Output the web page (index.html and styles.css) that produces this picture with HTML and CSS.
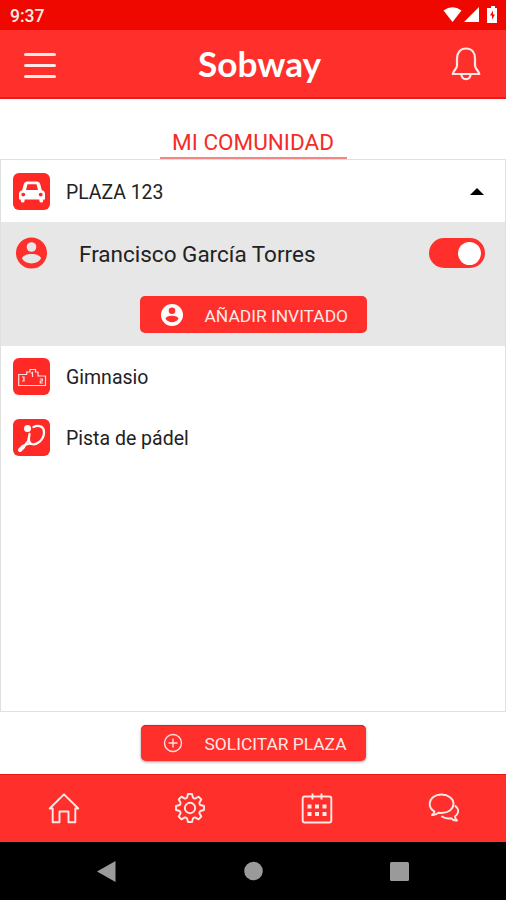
FILE: index.html
```html
<!DOCTYPE html>
<html lang="es">
<head>
<meta charset="utf-8">
<title>Sobway</title>
<link rel="stylesheet" href="styles.css">
</head>
<body>
<div class="status">
  <span>9:37</span>
  <svg width="56" height="18" viewBox="0 0 56 18" fill="#fff">
    <path d="M0.500 4.500Q9.500-2 18.500 4.500L9.500 16Z"/>
    <path d="M36 1v15H21Z"/>
    <path d="M46 2h2V0h4v2h2v15h-10V2Z"/>
    <path d="M50 4.500l-3 5h2v4l3-5h-2Z" fill="#ef0800"/>
  </svg>
</div>
<header class="header">
  <div class="menu"><i></i><i></i><i></i></div>
  <h1>Sobway</h1>
  <svg class="bell" width="30" height="34" viewBox="0 0 30 34" fill="none" stroke="#ffe9e7" stroke-width="2.200" stroke-linejoin="round">
    <path d="M6 18.500V11.500C6 5.500 9.500 1.500 15 1.500S24 5.500 24 11.500V18.500C24 22 27.500 23 28.300 27H1.700C2.500 23 6 22 6 18.500Z"/>
    <path d="M10.500 28C11 33.500 19 33.500 19.500 28"/>
  </svg>
</header>
<div class="tabs"><div class="tab"><span>MI COMUNIDAD</span></div></div>
<main class="list">
  <div class="row">
    <span class="tile">
      <svg width="38" height="38" viewBox="0 0 38 38">
        <path fill="#fff" fill-rule="evenodd" d="M14 8.500H24Q26.500 8.500 27.200 11L28.700 17Q32 18 32 21V26.500H30.200V28Q30 29.500 28.300 29.500T26.400 28V26.500H11.600V28Q11.400 29.500 9.700 29.500T7.800 28V26.500H6V21Q6 18 9.300 17L10.800 11Q11.500 8.500 14 8.500ZM14.500 11.300 13 17H25L23.500 11.300Z"/>
        <circle cx="10.300" cy="21.600" r="1.900" fill="#ff2a26"/><circle cx="27.700" cy="21.600" r="1.900" fill="#ff2a26"/>
      </svg>
    </span>
    <span class="label plaza">PLAZA 123</span>
    <svg class="caret" width="14" height="7" viewBox="0 0 14 7"><path d="M0 7 7 0l7 7Z"/></svg>
  </div>
  <section class="guests">
    <div class="person">
      <svg width="32" height="32" viewBox="0 0 32 32">
        <circle cx="16.500" cy="16" r="15.500" fill="#ff2f2b"/>
        <circle cx="16.500" cy="10" r="4.800" fill="#e7e7e7"/>
        <path d="M7 21.500C8 15.500 25 15.500 26 21.500C22 28 11 28 7 21.500Z" fill="#e7e7e7"/>
      </svg>
      <span class="name">Francisco García Torres</span>
      <span class="switch"><i></i></span>
    </div>
    <button class="button invite">
      <svg width="22" height="22" viewBox="0 0 32 32">
        <circle cx="16" cy="16" r="16" fill="#fff"/>
        <circle cx="16" cy="9.800" r="4.800" fill="#ff2f2b"/>
        <path d="M6.500 21.500C7.500 15.500 24.500 15.500 25.500 21.500C21.500 28 10.500 28 6.500 21.500Z" fill="#ff2f2b"/>
      </svg>
      <span>AÑADIR INVITADO</span>
    </button>
  </section>
  <div class="row facility">
    <span class="tile">
      <svg width="38" height="38" viewBox="0 0 38 38" fill="none" stroke="#fff" stroke-opacity=".85" stroke-width="1.200">
        <path d="M5.700 27.500V16.500H13.700V14H17V11.500H22.500V14H25V18H32.500V27.500Z"/>
        <path d="M18.300 15.500l1.200-1V19M9 19h2v4H9M10 21h1M26.800 21h2.500v2h-2v2h2.500"/>
      </svg>
    </span>
    <span class="label gym">Gimnasio</span>
  </div>
  <div class="row facility">
    <span class="tile">
      <svg width="38" height="38" viewBox="0 0 38 38" fill="none" stroke="#fff" stroke-linecap="round">
        <circle cx="14.500" cy="9.500" r="3.500" fill="#fff" stroke="none"/>
        <path stroke-width="2.300" d="M20.500 8C26 5.500 31.500 7.500 31 14C30.500 21 24 26.500 18.500 25C15 24 15.500 20 16.500 15"/>
        <path stroke-width="1.800" d="M16 19C15.500 22 14 24 11.500 26.500M18.500 25C16 24.500 14 25 11.500 26.500"/>
        <path stroke-width="4" d="M10.500 27.500 7 31"/>
      </svg>
    </span>
    <span class="label padel">Pista de pádel</span>
  </div>
</main>
<div class="action">
  <button class="button request">
    <svg width="20" height="20" viewBox="0 0 20 20" fill="none" stroke="#fff" stroke-opacity=".85" stroke-width="1.400"><circle cx="10" cy="10" r="8.500"/><path d="M10 5.500v9M5.500 10h9"/></svg>
    <span>SOLICITAR PLAZA</span>
  </button>
</div>
<nav class="nav">
  <svg viewBox="-16 -16 32 32"><path d="M-14.300 0.500 0-13.700 14.300 0.500H11.300V14.200H4.500V3.500H-4.500V14.200H-11.300V0.500Z"/></svg>
  <svg viewBox="-16 -16 32 32"><circle r="5.200"/><path d="M-3-10.300-2-14H2L3-10.300Q4-9.300 5.160-9.400L8.500-11.300 11.300-8.500 9.400-5.160Q9.300-4 10.300-3L14-2V2L10.300 3Q9.300 4 9.400 5.160L11.300 8.500 8.500 11.300 5.160 9.400Q4 9.300 3 10.300L2 14H-2L-3 10.300Q-4 9.300-5.160 9.400L-8.500 11.300-11.300 8.500-9.400 5.160Q-9.300 4-10.300 3L-14 2V-2L-10.300-3Q-9.300-4-9.400-5.160L-11.300-8.500-8.500-11.300-5.160-9.400Q-4-9.300-3-10.300Z"/></svg>
  <svg viewBox="-16 -16 32 32"><rect x="-14.300" y="-11.500" width="28.600" height="26" rx="2"/><path d="M-4.500-14.500v6M4.500-14.500v6"/><path stroke-width="4" stroke-dasharray="4 3.500" d="M-9.500-1.500h19M-9.500 6h19"/></svg>
  <svg viewBox="-17 -16 32 32"><path d="M-9.500 3.500C-13 1.500-14.500-1-14.300-4.500C-14-10-9-13.500-2.500-13.500S9.500-9.500 9.500-4.200S4 5-2.500 5L-5.500 4.800C-7.500 6.500-9.500 7.200-12 7C-10.500 6-9.700 5-9.500 3.500Z"/><path d="M10.800-2.500C15.500 1 15 5.500 11 8.300C11 10.500 11.500 11.500 13 12.500C10.500 12.800 8.500 12 7 10.200C3 11 0 10-2.500 8.200"/></svg>
</nav>
<div class="system">
  <svg width="19" height="21" viewBox="0 0 19 21"><path d="M0 10.500 18.500 0v21Z"/></svg>
  <svg width="20" height="20" viewBox="0 0 20 20"><circle cx="10.500" cy="10" r="9.300"/></svg>
  <svg width="19" height="19" viewBox="0 0 19 19"><rect width="19" height="19" rx="1.500"/></svg>
</div>
</body>
</html>
```

FILE: styles.css
```css
* { box-sizing: border-box; }
body {
  margin: 0;
  width: 506px;
  height: 900px;
  display: flex;
  flex-direction: column;
  overflow: hidden;
  background: #fff;
  color: #222;
  font-family: Roboto, "Liberation Sans", sans-serif;
}
svg { display: block; flex: none; }
.status {
  height: 30px;
  flex: none;
  display: flex;
  justify-content: space-between;
  align-items: center;
  padding: 0 7px 0 10px;
  background: #ef0800;
  color: #ffe9e7;
  font-size: 17.5px;
  font-weight: 500;
}
.status span { padding-top: 2px; }
.header {
  height: 69px;
  flex: none;
  display: grid;
  grid-template-columns: 64px 1fr 64px;
  align-items: center;
  padding: 0 8px;
  background: #ff2f2c;
  border-bottom: 2px solid #e91b18;
  color: #fff;
}
.menu { display: grid; gap: 8px; padding: 3px 0 0 16px; width: 48px; }
.menu i { height: 3px; border-radius: 2px; background: #ffe9e7; }
.header h1 {
  margin: 0;
  padding: 0 0 2px 13px;
  text-align: center;
  font: 700 35.2px/44px Lato, sans-serif;
}
.bell { justify-self: center; }
.tabs { height: 60px; flex: none; display: flex; justify-content: center; align-items: flex-end; }
.tab {
  width: 187px;
  height: 34px;
  padding-top: 4px;
  border-bottom: 2px solid #f58582;
  color: #f52b28;
  text-align: center;
  font-size: 22.5px;
  line-height: 26px;
  white-space: nowrap;
}
.list { flex: 1; border: 1px solid #e0e0e0; }
.row { height: 62px; display: flex; align-items: center; padding: 0 21px 0 12px; }
.facility { height: 61px; }
.tile {
  width: 37px;
  height: 37px;
  border-radius: 6px;
  background: #ff2a26;
  margin-right: 16px;
  overflow: hidden;
}
.label { font-size: 19.5px; line-height: 24px; padding-top: 3px; }
.plaza { font-size: 19.4px; }
.caret { margin-left: auto; }
.guests { height: 124px; background: #e7e7e7; display: flex; flex-direction: column; align-items: center; }
.person { width: 100%; height: 62px; display: flex; align-items: center; padding: 0 20px 0 14px; }
.name { margin-left: 32px; padding-top: 2px; font-size: 22.5px; }
.switch {
  width: 56px;
  height: 30px;
  margin-left: auto;
  padding: 4px;
  border-radius: 15px;
  background: #ff2f2b;
  display: flex;
  justify-content: flex-end;
}
.switch i { width: 23px; height: 23px; border-radius: 50%; background: #fff; }
.button {
  height: 37px;
  border: 0;
  border-radius: 5px;
  background: #ff2f2c;
  color: #ffe9e7;
  display: flex;
  align-items: center;
  font: 400 17.4px/22px Roboto, sans-serif;
  white-space: nowrap;
}
.button span { padding-top: 2px; }
.invite { width: 227px; margin-top: 12px; padding: 0 0 0 21px; gap: 22px; }
.action { height: 62px; flex: none; display: flex; justify-content: center; padding-top: 13px; }
.request { width: 225px; height: 36px; padding: 0 0 0 22px; gap: 22px; box-shadow: 0 1px 3px #0006, inset 0 1px #e51c19; }
.nav {
  height: 68px;
  flex: none;
  display: grid;
  grid-template-columns: repeat(4, 1fr);
  align-items: center;
  justify-items: center;
  padding-left: 1px;
  background: #ff2f2c;
  border-top: 1px solid #e51512;
}
.nav svg { width: 32px; height: 32px; margin-top: -1px; fill: none; stroke: #ffe9e7; stroke-width: 1.9; stroke-linejoin: round; }
.system {
  height: 58px;
  flex: none;
  display: flex;
  justify-content: space-between;
  align-items: center;
  padding: 0 97px;
  background: #000;
  fill: #9a9a9a;
}
```
